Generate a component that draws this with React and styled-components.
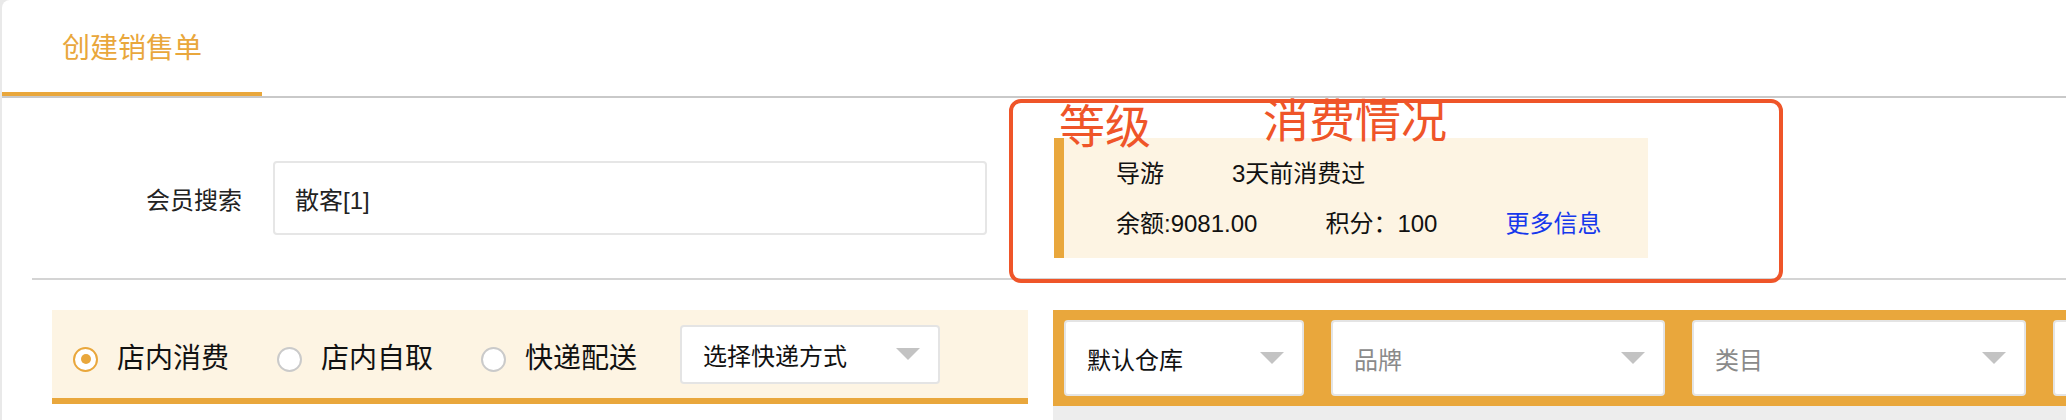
import React, { useState } from "react";
import styled, { createGlobalStyle } from "styled-components";

//constants
const ORANGE = "#e9a73c";
const CREAM = "#fdf4e3";
const RED = "#ef5529";

const GlobalStyle = createGlobalStyle`
  html, body {
    margin: 0;
    padding: 0;
    overflow: hidden;
    background: #e9e9e9;
  }
  body {
    font-family: "Liberation Sans", "Noto Sans CJK SC", sans-serif;
    color: #111;
  }
`;

const DELIVERY_OPTIONS = ["店内消费", "店内自取", "快递配送"];

const FILTERS = [
  { text: "默认仓库", width: 240, placeholder: false },
  { text: "品牌", width: 334, placeholder: true },
  { text: "类目", width: 334, placeholder: true },
  { text: "", width: 334, placeholder: true },
];

const App = () => {
  const [delivery, setDelivery] = useState(0);

  return (
    <Page>
      <GlobalStyle />
      <Card>
        <TabBar>
          <Tab>创建销售单</Tab>
        </TabBar>

        <Content>
          <MemberRow>
            <FieldLabel>会员搜索</FieldLabel>
            <SearchInput type="text" defaultValue="散客[1]" />
            <InfoCard>
              <InfoRow>
                <span>导游</span>
                <span>3天前消费过</span>
              </InfoRow>
              <InfoRow>
                <span>余额:9081.00</span>
                <span>积分：100</span>
                <MoreLink>更多信息</MoreLink>
              </InfoRow>
            </InfoCard>
          </MemberRow>

          <BottomRow>
            <DeliveryBar>
              <RadioGroup>
                {DELIVERY_OPTIONS.map((label, idx) => (
                  <RadioOption key={label} onClick={() => setDelivery(idx)}>
                    <RadioCircle checked={delivery === idx} />
                    {label}
                  </RadioOption>
                ))}
              </RadioGroup>
              <SelectBox width={260} height={59} gapLeft={43}>
                <span>选择快递方式</span>
                <Caret />
              </SelectBox>
            </DeliveryBar>

            <ProductPanel>
              <FilterBar>
                {FILTERS.map((f, idx) => (
                  <SelectBox
                    key={idx}
                    width={f.width}
                    height={76}
                    placeholder={f.placeholder ? 1 : 0}
                  >
                    <span>{f.text}</span>
                    <Caret />
                  </SelectBox>
                ))}
              </FilterBar>
              <PanelBody />
            </ProductPanel>
          </BottomRow>
        </Content>
      </Card>

      {/* annotation drawn over the screenshot */}
      <AnnotationBox />
      <AnnotationLabel left={1059} top={100}>
        等级
      </AnnotationLabel>
      <AnnotationLabel left={1263} top={94}>
        消费情况
      </AnnotationLabel>
    </Page>
  );
};

const Page = styled.div`
  position: relative;
  width: 2066px;
  height: 420px;
  overflow: hidden;
`;

const Card = styled.div`
  margin-left: 2px;
  height: 420px;
  background: #fff;
  border-top-left-radius: 8px;
`;

const TabBar = styled.div`
  display: flex;
  height: 96px;
  border-bottom: 2px solid #c9c9c9;
`;

const Tab = styled.div`
  display: flex;
  align-items: center;
  justify-content: center;
  box-sizing: border-box;
  width: 260px;
  height: 96px;
  border-bottom: 4px solid ${ORANGE};
  font-size: 28px;
  color: ${ORANGE};
`;

const Content = styled.div`
  padding-left: 30px;
`;

const MemberRow = styled.div`
  display: flex;
  align-items: center;
  box-sizing: border-box;
  height: 182px;
  padding-top: 20px;
  border-bottom: 2px solid #d4d4d4;
`;

const FieldLabel = styled.div`
  width: 210px;
  margin-right: 31px;
  text-align: right;
  font-size: 24px;
  color: #222;
`;

const SearchInput = styled.input`
  box-sizing: border-box;
  width: 714px;
  height: 74px;
  padding: 0 20px;
  border: 2px solid #e6e6e6;
  border-radius: 4px;
  outline: none;
  background: #fff;
  font-family: inherit;
  font-size: 24px;
  color: #222;
`;

const InfoCard = styled.div`
  display: flex;
  flex-direction: column;
  gap: 26px;
  box-sizing: border-box;
  width: 594px;
  height: 120px;
  margin-left: 67px;
  padding: 24px 0 22px 52px;
  background: ${CREAM};
  border-left: 10px solid ${ORANGE};
`;

const InfoRow = styled.div`
  display: flex;
  gap: 68px;
  font-size: 24px;
  line-height: 24px;
  color: #111;
`;

const MoreLink = styled.span`
  color: #1638ec;
  cursor: pointer;
`;

const BottomRow = styled.div`
  display: flex;
  align-items: flex-start;
  gap: 25px;
  margin-top: 30px;
  padding-left: 20px;
`;

const DeliveryBar = styled.div`
  display: flex;
  align-items: center;
  flex-shrink: 0;
  box-sizing: border-box;
  width: 976px;
  height: 94px;
  padding-left: 21px;
  background: ${CREAM};
  border-bottom: 6px solid ${ORANGE};
`;

const RadioGroup = styled.div`
  display: flex;
  gap: 48px;
`;

const RadioOption = styled.div`
  display: flex;
  align-items: center;
  gap: 19px;
  padding-top: 10px;
  font-size: 28px;
  line-height: 28px;
  color: #111;
  cursor: pointer;
`;

const RadioCircle = styled.span`
  display: flex;
  align-items: center;
  justify-content: center;
  box-sizing: border-box;
  width: 25px;
  height: 25px;
  border: 2px solid ${(p) => (p.checked ? ORANGE : "#cacaca")};
  border-radius: 50%;
  background: #fff;

  &::after {
    content: "";
    display: ${(p) => (p.checked ? "block" : "none")};
    width: 10px;
    height: 10px;
    border-radius: 50%;
    background: ${ORANGE};
  }
`;

const SelectBox = styled.div`
  display: flex;
  align-items: center;
  justify-content: space-between;
  flex-shrink: 0;
  box-sizing: border-box;
  width: ${(p) => p.width}px;
  height: ${(p) => p.height}px;
  margin-left: ${(p) => p.gapLeft || 0}px;
  padding: 0 18px 0 21px;
  background: #fff;
  border: 2px solid #e4e4e4;
  border-radius: 4px;
  font-size: 24px;
  color: ${(p) => (p.placeholder ? "#8a8a8a" : "#111")};
`;

const Caret = styled.span`
  width: 0;
  height: 0;
  border-left: 12px solid transparent;
  border-right: 12px solid transparent;
  border-top: 12px solid #c3c3c3;
`;

const ProductPanel = styled.div`
  flex-shrink: 0;
  width: 1100px;
  background: #ededed;
`;

const FilterBar = styled.div`
  display: flex;
  align-items: center;
  gap: 27px;
  height: 96px;
  padding-left: 11px;
  background: ${ORANGE};
`;

const PanelBody = styled.div`
  height: 60px;
`;

const AnnotationBox = styled.div`
  position: absolute;
  left: 1009px;
  top: 99px;
  box-sizing: border-box;
  width: 774px;
  height: 184px;
  border: 4px solid ${RED};
  border-radius: 12px;
  pointer-events: none;
`;

const AnnotationLabel = styled.div`
  position: absolute;
  left: ${(p) => p.left}px;
  top: ${(p) => p.top}px;
  font-family: "Noto Sans CJK SC", sans-serif;
  font-size: 46px;
  line-height: 46px;
  color: ${RED};
  pointer-events: none;
`;

export default App;
